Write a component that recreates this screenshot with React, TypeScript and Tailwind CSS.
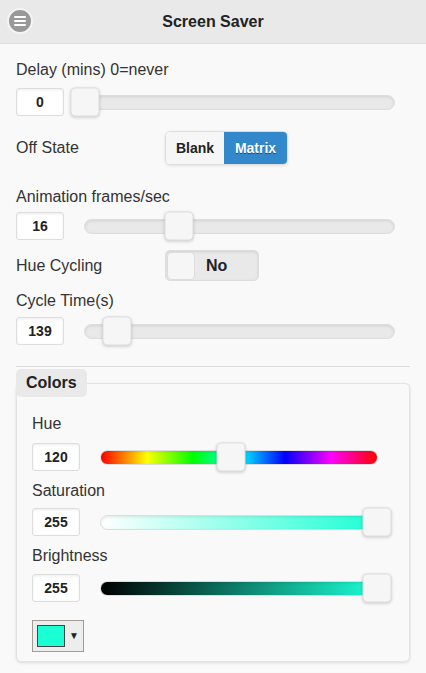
import React from 'react';

const font = { fontFamily: '"Liberation Sans", Arial, Helvetica, sans-serif' };

// Slider: number box + track with a thumb lying over it
const Slider = ({
    value,
    pct,
    track = 'bg-[#e9e9e9]',
    gap = 'ml-5',
    right = 'mr-[15px]',
}: {
    value: string;
    pct: number;
    track?: string;
    gap?: string;
    right?: string;
}) => (
    <div className="flex items-center">
        <div className="w-12 h-7 flex items-center justify-center bg-white border border-[#dddddd] rounded-[3px] shadow-[inset_0_1px_3px_rgba(0,0,0,0.08)] text-[14px] font-bold text-[#222]">
            {value}
        </div>
        <div className={`relative flex-1 h-[15px] ${gap} ${right} rounded-[8px] border border-[#dddddd] ${track} shadow-[inset_0_1px_3px_rgba(0,0,0,0.1)]`}>
            <div
                className="absolute top-1/2 -translate-y-1/2 -translate-x-1/2 w-[29px] h-[29px] bg-[#f6f6f6] border border-[#dddddd] rounded-[5px] shadow-[0_1px_3px_rgba(0,0,0,0.15)]"
                style={{ left: `${pct}%` }}
            />
        </div>
    </div>
);

const Label = ({ children, className = '' }: { children: React.ReactNode; className?: string }) => (
    <div className={`text-[16px] leading-5 text-[#333] ${className}`}>{children}</div>
);

export default function App() {
    return (
        <div className="min-h-screen bg-[#f9f9f9]" style={font}>
            {/* Header */}
            <header className="relative h-[44px] bg-[#e9e9e9] border-b border-[#dddddd] flex items-center justify-center">
                <button className="absolute left-[7px] top-[8px] w-[26px] h-[26px] rounded-full bg-[#999] border-2 border-[#f4f4f4] flex flex-col items-center justify-center gap-[2px]">
                    <span className="block w-[12px] h-[2px] bg-white rounded" />
                    <span className="block w-[12px] h-[2px] bg-white rounded" />
                    <span className="block w-[12px] h-[2px] bg-white rounded" />
                </button>
                <h1 className="text-[16px] font-bold text-[#222]">Screen Saver</h1>
            </header>

            <div className="px-4">
                <Label className="mt-4">Delay (mins) 0=never</Label>
                <div className="mt-2">
                    <Slider value="0" pct={0} />
                </div>

                {/* Off State */}
                <div className="mt-[15px] flex items-center">
                    <Label className="w-[149px]">Off State</Label>
                    <div className="flex h-[34px] rounded-[5px] border border-[#dddddd] overflow-hidden shadow-[0_1px_3px_rgba(0,0,0,0.1)] text-[14px] font-bold">
                        <div className="w-[58px] flex items-center justify-center bg-[#f6f6f6] text-[#222]">Blank</div>
                        <div className="w-[63px] flex items-center justify-center bg-[#3388cc] text-white [text-shadow:0_1px_0_#005599]">Matrix</div>
                    </div>
                </div>

                <Label className="mt-[22px]">Animation frames/sec</Label>
                <div className="mt-[5px]">
                    <Slider value="16" pct={30.5} />
                </div>

                {/* Hue Cycling */}
                <div className="mt-[10px] flex items-center">
                    <Label className="w-[149px]">Hue Cycling</Label>
                    <div className="flex items-center w-[94px] h-[31px] rounded-[5px] border border-[#dddddd] bg-[#e9e9e9] shadow-[inset_0_1px_3px_rgba(0,0,0,0.1)] px-px">
                        <div className="w-[28px] h-[28px] bg-[#f6f6f6] border border-[#dddddd] rounded-[5px]" />
                        <span className="ml-[11px] text-[16px] font-bold text-[#222]">No</span>
                    </div>
                </div>

                <Label className="mt-[10px]">Cycle Time(s)</Label>
                <div className="mt-[6px]">
                    <Slider value="139" pct={10.5} />
                </div>

                <div className="mt-[21px] h-px bg-[#dddddd]" />

                {/* Colors collapsible */}
                <div className="relative mt-[16px] mb-3 border border-[#e3e3e3] rounded-[5px] bg-[#f9f9f9] shadow-[0_1px_3px_rgba(0,0,0,0.12)] px-[15px] pb-[9px]">
                    <div className="absolute -left-px -top-[15px] h-[28px] px-[10px] flex items-center bg-[#e9e9e9] rounded-[5px] text-[16px] font-bold text-[#222]">
                        Colors
                    </div>

                    <Label className="mt-[30px]">Hue</Label>
                    <div className="mt-[9px]">
                        <Slider
                            value="120"
                            pct={47}
                            gap="ml-5"
                            right="mr-4"
                            track="bg-[linear-gradient(to_right,#ff0000,#ffff00,#00ff00,#00ffff,#0000ff,#ff00ff,#ff0000)]"
                        />
                    </div>

                    <Label className="mt-[10px]">Saturation</Label>
                    <div className="mt-[7px]">
                        <Slider
                            value="255"
                            pct={100}
                            gap="ml-5"
                            right="mr-4"
                            track="bg-[linear-gradient(to_right,#ffffff,#1bffd5)]"
                        />
                    </div>

                    <Label className="mt-[10px]">Brightness</Label>
                    <div className="mt-[8px]">
                        <Slider
                            value="255"
                            pct={100}
                            gap="ml-5"
                            right="mr-4"
                            track="bg-[linear-gradient(to_right,#000000,#1bffd5)]"
                        />
                    </div>

                    {/* colour picker button */}
                    <div className="mt-[18px] w-[52px] h-[32px] border border-[#a39c95] bg-[#ededed] flex items-center pl-[4px]">
                        <div className="w-[28px] h-[22px] bg-[#1bffd5] border border-[#444]" />
                        <span className="ml-[4px] text-[10px] leading-none text-[#222]">▼</span>
                    </div>
                </div>
            </div>
        </div>
    );
}
